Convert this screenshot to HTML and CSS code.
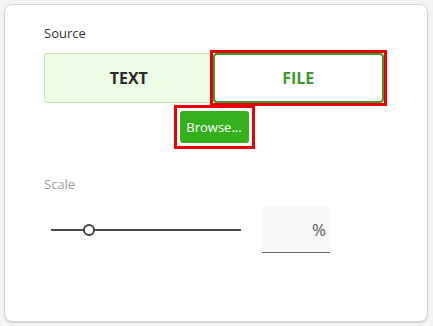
FILE: index.html
```html
<!DOCTYPE html>
<html>
<head>
<meta charset="utf-8">
<link rel="stylesheet" href="styles.css">
</head>
<body>
<div class="card">
  <div class="label">Source</div>
  <div class="segmented">
    <button class="seg seg-text">TEXT</button>
    <button class="seg seg-file highlighted">FILE</button>
  </div>
  <div class="browse-row">
    <button class="browse highlighted">Browse...</button>
  </div>
  <div class="label label-disabled">Scale</div>
  <div class="scale-row">
    <div class="slider"><span class="thumb"></span></div>
    <div class="pct-input"><span>%</span></div>
  </div>
</div>
</body>
</html>
```
FILE: styles.css
```css
html, body {
  margin: 0;
  padding: 0;
  background: #f3f3f3;
  font-family: "Open Sans", "Noto Sans", sans-serif;
}
body {
  padding: 4px;
  width: 433px;
  height: 326px;
  box-sizing: border-box;
}
.card {
  width: 424px;
  height: 318px;
  box-sizing: border-box;
  background: #ffffff;
  border: 1px solid #d4d4d4;
  border-radius: 8px;
  box-shadow: 0 1px 1px rgba(0,0,0,0.12);
  padding: 19px 39px;
}
.label {
  font-size: 13px;
  line-height: 18px;
  font-weight: 500;
  color: #333333;
}
.label-disabled {
  margin-top: 32px;
  font-weight: 400;
  color: #9c9c9c;
}
.segmented {
  margin-top: 11px;
  display: flex;
  width: 340px;
  height: 50px;
}
.seg {
  flex: 1;
  box-sizing: border-box;
  height: 50px;
  margin: 0;
  font-family: "Open Sans", "Noto Sans", sans-serif;
  font-size: 16px;
  font-weight: 700;
  padding: 0;
  cursor: pointer;
}
.seg-text {
  background: #edfde5;
  border: 1px solid #bdeaae;
  border-right: none;
  border-radius: 4px 0 0 4px;
  color: #2a2a2a;
}
.seg-file {
  background: #ffffff;
  border: 2px solid #3b9b29;
  border-radius: 4px;
  color: #3c9a28;
}
.highlighted {
  position: relative;
}
.highlighted::after {
  content: "";
  position: absolute;
  inset: -5px;
  border: 3px solid #ee0000;
  pointer-events: none;
}
.browse.highlighted::after {
  inset: -6px;
}
.browse-row {
  display: flex;
  justify-content: center;
  width: 340px;
  margin-top: 8px;
}
.browse {
  width: 69px;
  height: 32px;
  box-sizing: border-box;
  background: #33b01c;
  color: #ffffff;
  border: none;
  border-radius: 3px;
  font-family: "Open Sans", "Noto Sans", sans-serif;
  font-size: 13px;
  padding: 0;
}
.scale-row {
  margin-top: 13px;
  display: flex;
  align-items: center;
}
.slider {
  position: relative;
  margin-left: 7px;
  width: 190px;
  height: 14px;
}
.slider::before {
  content: "";
  position: absolute;
  left: 0;
  right: 0;
  top: 6px;
  height: 2px;
  background: #4a4a4a;
}
.thumb {
  position: absolute;
  left: 32px;
  top: 1px;
  width: 12px;
  height: 12px;
  box-sizing: border-box;
  border: 2px solid #444444;
  border-radius: 50%;
  background: #ffffff;
}
.pct-input {
  margin-left: 21px;
  width: 68px;
  height: 47px;
  box-sizing: border-box;
  background: #f7f7f7;
  border-bottom: 1px solid #666666;
  display: flex;
  align-items: center;
  justify-content: flex-end;
  padding-right: 4px;
  font-size: 17px;
  font-weight: 400;
  color: #5a5a5a;
}
```
